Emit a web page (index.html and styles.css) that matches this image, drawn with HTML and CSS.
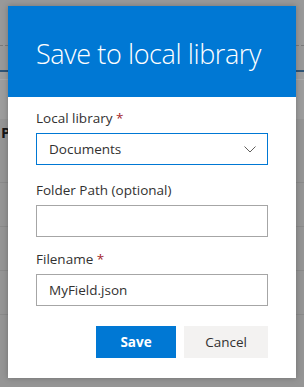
FILE: index.html
```html
<!DOCTYPE html>
<html lang="en">
<head>
    <meta charset="UTF-8">
    <meta name="viewport" content="width=device-width, initial-scale=1.0">
    <title>Save to local library</title>
    <link rel="stylesheet" href="styles.css">
</head>
<body>
    <div class="page">
        <div class="page-top">
            <div class="toolbar"></div>
            <div class="tabs"></div>
            <div class="section-title">P</div>
        </div>
        <div class="row"></div>
        <div class="row"></div>
        <div class="row"></div>
        <div class="row"></div>
    </div>

    <div class="dialog">
        <div class="dialog-header">
            <h1 class="dialog-title">Save to local library</h1>
        </div>
        <div class="dialog-body">
            <div class="field dropdown-field">
                <label class="label required">Local library</label>
                <div class="dropdown">
                    <span>Documents</span>
                    <svg class="chevron" width="12" height="7" viewBox="0 0 12 7">
                        <path d="M0.5 0.5 L6 6 L11.5 0.5" fill="none" stroke="#605e5c" stroke-width="1"/>
                    </svg>
                </div>
            </div>
            <div class="field">
                <label class="label">Folder Path (optional)</label>
                <input class="text-input" type="text" value="">
            </div>
            <div class="field">
                <label class="label required">Filename</label>
                <input class="text-input" type="text" value="MyField.json">
            </div>
            <div class="actions">
                <button class="button primary">Save</button>
                <button class="button default">Cancel</button>
            </div>
        </div>
    </div>
</body>
</html>
```

FILE: styles.css
```css
body {
    margin: 0;
    width: 304px;
    height: 387px;
    overflow: hidden;
    background-color: #959595;
    font-family: "Open Sans", "Noto Sans", sans-serif;
    color: #323130;
    position: relative;
}

/* page behind the overlay */
.page {
    width: 100%;
}

.page-top {
    height: 119px;
    background-color: #9d9d9d;
    position: relative;
}

.toolbar {
    height: 45px;
    border-bottom: 1px dashed #7a7a7a;
    background-color: #999999;
}

.tabs {
    height: 24px;
    border-bottom: 2px solid #2f5577;
    background-color: #999999;
}

.section-title {
    margin-top: 7px;
    border-top: 1px solid #a8a8a8;
    padding: 43px 0 0 1px;
    font-size: 15px;
    font-weight: bold;
    color: #161616;
    line-height: 18px;
}

.row {
    height: 43px;
    border-bottom: 1px solid #8a8a8a;
}

.page-top + .row {
    height: 63px;
}

/* dialog */
.dialog {
    position: absolute;
    left: 8px;
    top: 6px;
    width: 288px;
    background-color: #ffffff;
    box-shadow: 0 0 6px rgba(0, 0, 0, 0.25);
}

.dialog-header {
    height: 91px;
    background-color: #0078d4;
    padding-left: 28px;
    box-sizing: border-box;
}

.dialog-title {
    margin: 0;
    padding-top: 30px;
    font-size: 27px;
    font-weight: 300;
    letter-spacing: -0.4px;
    line-height: 36px;
    color: #ffffff;
}

.dialog-body {
    padding: 6px 28px 20px 28px;
}

.field {
    margin-bottom: 7px;
}

.dropdown-field {
    margin-bottom: 10px;
}

.label {
    display: block;
    font-size: 13.5px;
    line-height: 20px;
    padding: 5px 0;
    color: #323130;
}

.label.required::after {
    content: " *";
    color: #a4262c;
}

.dropdown {
    height: 32px;
    box-sizing: border-box;
    border: 1px solid #0078d4;
    display: flex;
    align-items: center;
    justify-content: space-between;
    padding: 0 11px 0 12px;
    font-size: 13.5px;
}

.text-input {
    display: block;
    width: 100%;
    height: 32px;
    box-sizing: border-box;
    border: 1px solid #a6a6a6;
    padding: 0 12px;
    font-family: inherit;
    font-size: 13.5px;
    color: #323130;
    outline: none;
}

.actions {
    display: flex;
    justify-content: flex-end;
    gap: 8px;
    margin-top: 20px;
}

.button {
    height: 32px;
    min-width: 80px;
    padding: 0 16px;
    border: none;
    font-family: inherit;
    font-size: 13.5px;
    cursor: pointer;
}

.button.primary {
    background-color: #0078d4;
    color: #ffffff;
    font-weight: bold;
}

.button.default {
    background-color: #f3f2f1;
    color: #323130;
    min-width: 84px;
}
```
